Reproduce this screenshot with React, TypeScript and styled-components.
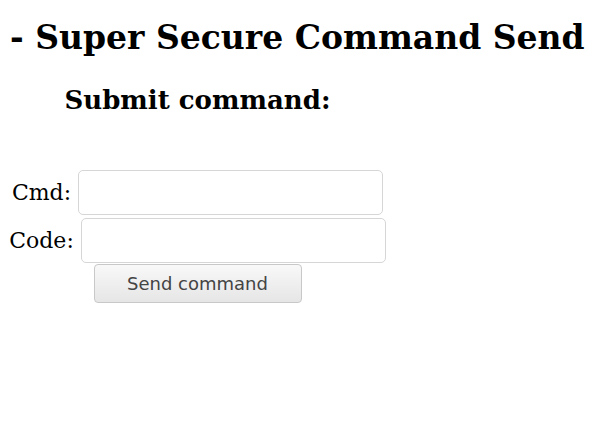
import styled, { createGlobalStyle } from 'styled-components';

const GlobalStyle = createGlobalStyle`
  html, body {
    margin: 0;
    padding: 0;
    background: #fff;
  }
  body {
    font-family: "DejaVu Serif", serif;
    color: #000;
  }
`;

const Page = styled.div`
  padding: 14px 0 0 10px;
`;

const Title = styled.h1`
  margin: 0;
  font-family: "DejaVu Serif", serif;
  font-weight: bold;
  font-size: 33px;
  line-height: 48px;
  white-space: nowrap;
`;

const Panel = styled.div`
  width: 375px;
  text-align: center;
`;

const SubTitle = styled.h2`
  margin: 22px 0 54px 0;
  font-family: "DejaVu Serif", serif;
  font-weight: bold;
  font-size: 26px;
  line-height: 32px;
`;

const Form = styled.form`
  display: flex;
  flex-direction: column;
  align-items: center;
`;

const Row = styled.div`
  display: flex;
  align-items: center;
  gap: 7px;
  margin-bottom: 3px;
`;

const Label = styled.label`
  font-family: "DejaVu Serif", serif;
  font-size: 22px;
`;

const Input = styled.input`
  box-sizing: border-box;
  width: 305px;
  height: 45px;
  border: 1px solid #d6d6d6;
  border-radius: 5px;
  background: #fff;
  outline: none;
`;

const Button = styled.button`
  box-sizing: border-box;
  width: 208px;
  height: 39px;
  margin-top: -2px;
  border: 1px solid #c8c8c8;
  border-radius: 4px;
  background: linear-gradient(#f8f8f8, #e6e6e6);
  color: #444;
  font-family: "DejaVu Sans", sans-serif;
  font-size: 18px;
  cursor: pointer;
`;

const App = () => {
  return (
    <>
      <GlobalStyle />
      <Page>
        <Title>- Super Secure Command Send</Title>
        <Panel>
          <SubTitle>Submit command:</SubTitle>
          <Form onSubmit={(e) => e.preventDefault()}>
            <Row>
              <Label htmlFor="cmd">Cmd:</Label>
              <Input id="cmd" type="text" />
            </Row>
            <Row>
              <Label htmlFor="code">Code:</Label>
              <Input id="code" type="text" />
            </Row>
            <Button type="submit">Send command</Button>
          </Form>
        </Panel>
      </Page>
    </>
  );
};

export default App;
